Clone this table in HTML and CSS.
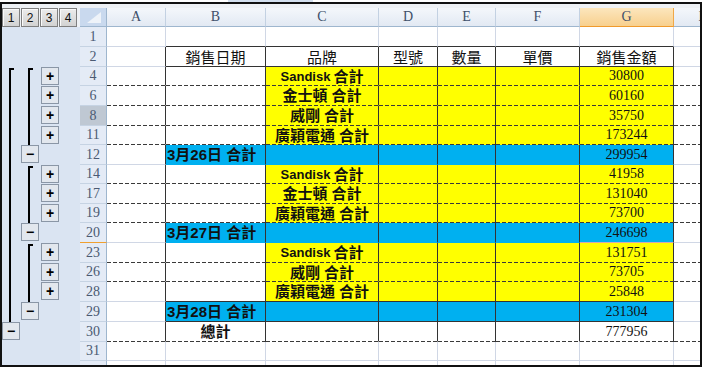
FILE: index.html
```html
<!DOCTYPE html>
<html lang="zh-Hant">
<head>
    <meta charset="UTF-8">
    <meta name="viewport" content="width=device-width, initial-scale=1.0">
    <title>銷售金額小計</title>
    <link rel="stylesheet" href="styles.css">
</head>
<body>
    <div class="topbar"><span class="tab"></span></div>

    <div class="sheet">
        <div class="strip"></div>

        <!-- column headers with the outline level buttons -->
        <div class="row head">
            <div class="levels">
                <span class="lvl">1</span><span class="lvl">2</span><span class="lvl">3</span><span class="lvl">4</span>
            </div>
            <div class="corner">
                <svg width="27" height="19" viewBox="0 0 27 19"><polygon points="21,4 21,15 7,15" fill="#eef3f9"/></svg>
            </div>
            <div class="colh">A</div>
            <div class="colh">B</div>
            <div class="colh">C</div>
            <div class="colh">D</div>
            <div class="colh">E</div>
            <div class="colh">F</div>
            <div class="colh on">G</div>
            <div class="colh">H</div>
        </div>

        <div class="row top">
            <div class="ol"></div>
            <div class="rh">1</div>
            <div class="c ca"></div><div class="c cb"></div><div class="c cc"></div><div class="c cd"></div>
            <div class="c ce"></div><div class="c cf"></div><div class="c cg"></div><div class="c ch"></div>
        </div>

        <div class="row t hdr">
            <div class="ol"></div>
            <div class="rh">2</div>
            <div class="c ca"></div>
            <div class="c cb">銷售日期</div>
            <div class="c cc">品牌</div>
            <div class="c cd">型號</div>
            <div class="c ce">數量</div>
            <div class="c cf">單價</div>
            <div class="c cg">銷售金額</div>
            <div class="c ch"></div>
        </div>

        <div class="row short t sub dash">
            <div class="ol"><span class="ln first s1"></span><span class="ln first s2"></span><span class="btn s3">+</span></div>
            <div class="rh">4</div>
            <div class="c ca"></div><div class="c cb"></div>
            <div class="c cc lbl"><span class="en">Sandisk</span> 合計</div>
            <div class="c cd"></div><div class="c ce"></div><div class="c cf"></div>
            <div class="c cg">30800</div>
            <div class="c ch"></div>
        </div>

        <div class="row t sub dash">
            <div class="ol"><span class="ln s1"></span><span class="ln s2"></span><span class="btn s3">+</span></div>
            <div class="rh">6</div>
            <div class="c ca"></div><div class="c cb"></div>
            <div class="c cc lbl">金士頓 合計</div>
            <div class="c cd"></div><div class="c ce"></div><div class="c cf"></div>
            <div class="c cg">60160</div>
            <div class="c ch"></div>
        </div>

        <div class="row t sub dash">
            <div class="ol"><span class="ln s1"></span><span class="ln s2"></span><span class="btn s3">+</span></div>
            <div class="rh hover">8</div>
            <div class="c ca"></div><div class="c cb"></div>
            <div class="c cc lbl">威剛 合計</div>
            <div class="c cd"></div><div class="c ce"></div><div class="c cf"></div>
            <div class="c cg">35750</div>
            <div class="c ch"></div>
        </div>

        <div class="row short t sub dash">
            <div class="ol"><span class="ln s1"></span><span class="ln s2"></span><span class="btn s3">+</span></div>
            <div class="rh">11</div>
            <div class="c ca"></div><div class="c cb"></div>
            <div class="c cc lbl">廣穎電通 合計</div>
            <div class="c cd"></div><div class="c ce"></div><div class="c cf"></div>
            <div class="c cg">173244</div>
            <div class="c ch"></div>
        </div>

        <div class="row t day">
            <div class="ol"><span class="ln s1"></span><span class="btn s2">&minus;</span></div>
            <div class="rh">12</div>
            <div class="c ca"></div>
            <div class="c cb lbl">3月26日 合計</div>
            <div class="c cc"></div><div class="c cd"></div><div class="c ce"></div><div class="c cf"></div>
            <div class="c cg">299954</div>
            <div class="c ch"></div>
        </div>

        <div class="row short t sub dash">
            <div class="ol"><span class="ln s1"></span><span class="ln first s2"></span><span class="btn s3">+</span></div>
            <div class="rh">14</div>
            <div class="c ca"></div><div class="c cb"></div>
            <div class="c cc lbl"><span class="en">Sandisk</span> 合計</div>
            <div class="c cd"></div><div class="c ce"></div><div class="c cf"></div>
            <div class="c cg">41958</div>
            <div class="c ch"></div>
        </div>

        <div class="row t sub dash">
            <div class="ol"><span class="ln s1"></span><span class="ln s2"></span><span class="btn s3">+</span></div>
            <div class="rh">17</div>
            <div class="c ca"></div><div class="c cb"></div>
            <div class="c cc lbl">金士頓 合計</div>
            <div class="c cd"></div><div class="c ce"></div><div class="c cf"></div>
            <div class="c cg">131040</div>
            <div class="c ch"></div>
        </div>

        <div class="row short t sub dash">
            <div class="ol"><span class="ln s1"></span><span class="ln s2"></span><span class="btn s3">+</span></div>
            <div class="rh">19</div>
            <div class="c ca"></div><div class="c cb"></div>
            <div class="c cc lbl">廣穎電通 合計</div>
            <div class="c cd"></div><div class="c ce"></div><div class="c cf"></div>
            <div class="c cg">73700</div>
            <div class="c ch"></div>
        </div>

        <div class="row t day">
            <div class="ol"><span class="ln s1"></span><span class="btn s2">&minus;</span></div>
            <div class="rh cur">20</div>
            <div class="c ca"></div>
            <div class="c cb lbl">3月27日 合計</div>
            <div class="c cc"></div><div class="c cd"></div><div class="c ce"></div><div class="c cf"></div>
            <div class="c cg sel">246698</div>
            <div class="c ch"></div>
        </div>

        <div class="row t sub dash">
            <div class="ol"><span class="ln s1"></span><span class="ln first s2"></span><span class="btn s3">+</span></div>
            <div class="rh">23</div>
            <div class="c ca"></div><div class="c cb"></div>
            <div class="c cc lbl"><span class="en">Sandisk</span> 合計</div>
            <div class="c cd"></div><div class="c ce"></div><div class="c cf"></div>
            <div class="c cg">131751</div>
            <div class="c ch"></div>
        </div>

        <div class="row short t sub dash">
            <div class="ol"><span class="ln s1"></span><span class="ln s2"></span><span class="btn s3">+</span></div>
            <div class="rh">26</div>
            <div class="c ca"></div><div class="c cb"></div>
            <div class="c cc lbl">威剛 合計</div>
            <div class="c cd"></div><div class="c ce"></div><div class="c cf"></div>
            <div class="c cg">73705</div>
            <div class="c ch"></div>
        </div>

        <div class="row t sub solid">
            <div class="ol"><span class="ln s1"></span><span class="ln s2"></span><span class="btn s3">+</span></div>
            <div class="rh">28</div>
            <div class="c ca"></div><div class="c cb"></div>
            <div class="c cc lbl">廣穎電通 合計</div>
            <div class="c cd"></div><div class="c ce"></div><div class="c cf"></div>
            <div class="c cg">25848</div>
            <div class="c ch"></div>
        </div>

        <div class="row t day solid">
            <div class="ol"><span class="ln s1"></span><span class="btn s2">&minus;</span></div>
            <div class="rh">29</div>
            <div class="c ca"></div>
            <div class="c cb lbl">3月28日 合計</div>
            <div class="c cc"></div><div class="c cd"></div><div class="c ce"></div><div class="c cf"></div>
            <div class="c cg">231304</div>
            <div class="c ch"></div>
        </div>

        <div class="row t dash">
            <div class="ol"><span class="btn s1">&minus;</span></div>
            <div class="rh">30</div>
            <div class="c ca"></div>
            <div class="c cb lbl mid">總計</div>
            <div class="c cc"></div><div class="c cd"></div><div class="c ce"></div><div class="c cf"></div>
            <div class="c cg">777956</div>
            <div class="c ch"></div>
        </div>

        <div class="row short">
            <div class="ol"></div>
            <div class="rh">31</div>
            <div class="c ca"></div><div class="c cb"></div><div class="c cc"></div><div class="c cd"></div>
            <div class="c ce"></div><div class="c cf"></div><div class="c cg"></div><div class="c ch"></div>
        </div>

        <div class="row">
            <div class="ol"></div>
            <div class="rh">32</div>
            <div class="c ca"></div><div class="c cb"></div><div class="c cc"></div><div class="c cd"></div>
            <div class="c ce"></div><div class="c cf"></div><div class="c cg"></div><div class="c ch"></div>
        </div>
    </div>
</body>
</html>
```

FILE: styles.css
```css
* {
    box-sizing: border-box;
}

body {
    margin: 0;
    background: #fff;
    font-family: "Liberation Serif", "Noto Sans CJK TC", serif;
}

.topbar {
    height: 2px;
    display: flex;
}

.topbar .tab {
    margin-left: 228px;
    width: 85px;
    background: #d3dfee;
}

.sheet {
    width: 702px;
    height: 365px;
    border: 2px solid #111;
    overflow: hidden;
    background: #fff;
}

.strip {
    height: 4px;
    background: #eef1f5;
}

/* every row shares the same column grid: outline, row number, A..H */
.row {
    display: grid;
    grid-template-columns: 78px 27px 59px 100px 113px 59px 58px 84px 94px 60px;
    grid-template-rows: minmax(0, 1fr);
    height: 20px;
}

.row.short,
.row.head {
    height: 19px;
}

/* outline level buttons */
.levels {
    display: grid;
    grid-template-columns: repeat(4, 19px);
    background: #eef1f5;
}

.lvl {
    width: 18px;
    height: 19px;
    border: 1px solid #7f7f7f;
    background: linear-gradient(#ececec, #d2d2d2);
    box-shadow: inset 1px 1px 0 #fafafa;
    font: 12px "Liberation Sans", sans-serif;
    display: flex;
    align-items: center;
    justify-content: center;
    color: #111;
}

.corner {
    background: #c9d9ee;
    border-right: 1px solid #9eb6ce;
    border-bottom: 1px solid #9eb6ce;
}

.corner svg {
    display: block;
}

.colh {
    background: linear-gradient(#f4f7fb, #e2e9f3);
    border-right: 1px solid #c3d1e2;
    border-bottom: 1px solid #9eb6ce;
    color: #3e4f69;
    font-size: 14px;
    line-height: 1;
    display: flex;
    align-items: center;
    justify-content: center;
}

.colh.on {
    background: linear-gradient(#fce6bd, #f8d08e);
    border-right-color: #f0a848;
    border-bottom-color: #f09a2c;
}

/* outline bar: four level slots */
.ol {
    display: grid;
    grid-template-columns: repeat(4, 19px) 2px;
    grid-template-rows: minmax(0, 1fr);
    background: #dae4f2;
}

.s1 { grid-column: 1; grid-row: 1; }
.s2 { grid-column: 2; grid-row: 1; }
.s3 { grid-column: 3; grid-row: 1; }

.ln {
    display: block;
    width: 5px;
    margin-left: 7px;
    border-left: 2px solid #000;
}

.ln.first {
    margin-top: 1px;
    border-top: 2px solid #000;
}

.btn {
    width: 18px;
    height: 18px;
    border: 1px solid #8a96a6;
    background: #e2e7ee;
    font: bold 14px "Liberation Sans", sans-serif;
    line-height: 1;
    display: flex;
    align-items: center;
    justify-content: center;
    color: #000;
}

.btn.s3 {
    margin-left: 1px;
}

/* row numbers */
.rh {
    background: #e4ebf6;
    border-right: 1px solid #9eb6ce;
    border-bottom: 1px solid #c6d3e3;
    color: #4b5a72;
    font-size: 14px;
    line-height: 1;
    display: flex;
    align-items: center;
    justify-content: center;
}

.rh.hover {
    background: #bfc8d3;
}

.rh.cur {
    border-bottom-color: #f0a030;
}

/* cells */
.c {
    border-right: 1px solid #d0d7e5;
    border-bottom: 1px solid #d0d7e5;
    font-size: 14px;
    line-height: 1;
    color: #111;
    display: flex;
    align-items: center;
    justify-content: center;
    white-space: nowrap;
    min-height: 0;
}

.hdr .c {
    font-family: "Noto Sans CJK TC", sans-serif;
    font-size: 15px;
}

.lbl {
    font-family: "Liberation Sans", "Noto Sans CJK TC", sans-serif;
    font-size: 15px;
    font-weight: bold;
}

.lbl .en {
    font-size: 13px;
    margin-right: 3px;
}

.day .cb {
    justify-content: flex-start;
    padding-left: 1px;
}

/* table borders */
.top .cb, .top .cc, .top .cd, .top .ce, .top .cf, .top .cg,
.hdr .cb, .hdr .cc, .hdr .cd, .hdr .ce, .hdr .cf, .hdr .cg {
    border-bottom-color: #333;
}

.t .ca, .t .cb, .t .cc, .t .cd, .t .ce, .t .cf, .t .cg {
    border-right-color: #333;
}

.sub .cc, .sub .cd, .sub .ce, .sub .cf, .sub .cg {
    background-color: #ff0;
    border-bottom-color: transparent;
}

.day .cb, .day .cc, .day .cd, .day .ce, .day .cf, .day .cg {
    background-color: #00b0f0;
    border-bottom-color: transparent;
}

/* dashed rule under each brand subtotal */
.dash .c {
    border-bottom-color: transparent;
    background-image: repeating-linear-gradient(90deg, #3a3a3a 0 4px, transparent 4px 6px);
    background-origin: border-box;
    background-size: 100% 1px;
    background-position: 0 100%;
    background-repeat: no-repeat;
}

.solid .cb, .solid .cc, .solid .cd, .solid .ce, .solid .cf, .solid .cg {
    border-bottom-color: #333;
}

.day .cg.sel {
    border-bottom-color: #d6a9b0;
}
```
